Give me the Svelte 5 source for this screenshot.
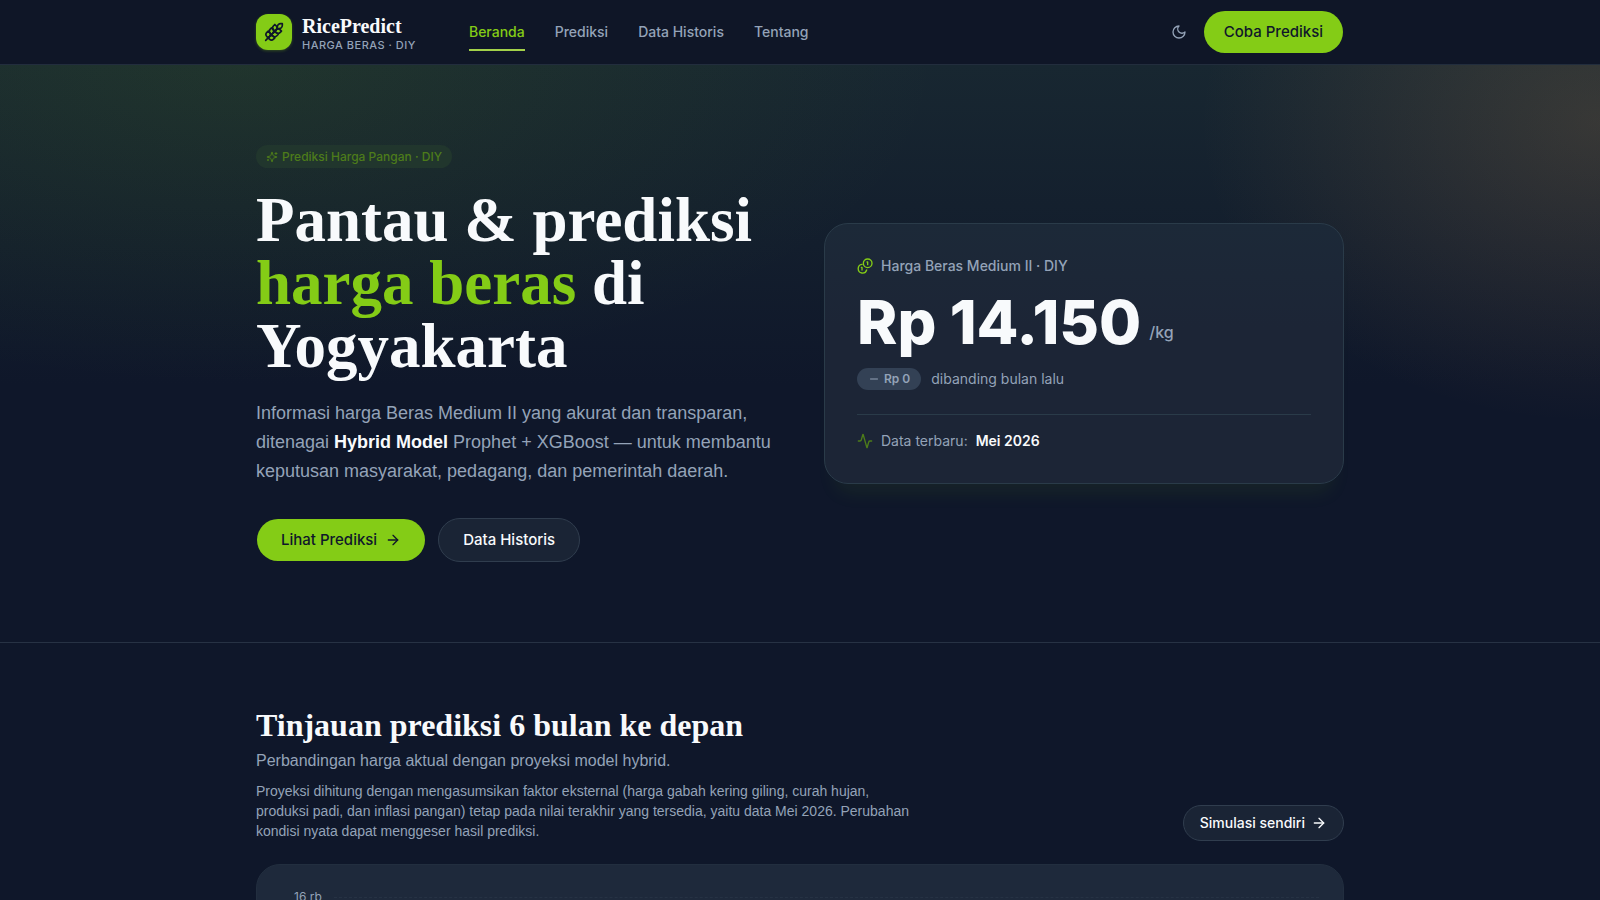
<script lang="ts">
  type Page = { id: string; label: string };

  const pages: Page[] = [
    { id: 'beranda', label: 'Beranda' },
    { id: 'prediksi', label: 'Prediksi' },
    { id: 'historis', label: 'Data Historis' },
    { id: 'tentang', label: 'Tentang' }
  ];

  let current = $state('beranda');

  // Latest recorded month, prices in rupiah per kg
  const price = 14150;
  const lastMonthPrice = 14150;
  const latestMonth = 'Mei 2026';

  const rupiah = (n: number) => 'Rp ' + String(n).replace(/\B(?=(\d{3})+$)/g, '.');
  const change = $derived(rupiah(Math.abs(price - lastMonthPrice)));
</script>

{#snippet arrow()}
  <svg class="icon" viewBox="0 0 24 24" aria-hidden="true"><path d="M5 12h14" /><path d="m12 5 7 7-7 7" /></svg>
{/snippet}

<header>
  <div class="container bar">
    <a class="brand" href="#beranda">
      <span class="logo">
        <svg class="wheat" viewBox="0 0 24 24" aria-hidden="true">
          <path d="M2 22 16 8" />
          <path d="M3.47 12.53 5 11l1.53 1.53a3.5 3.5 0 0 1 0 4.94L5 19l-1.53-1.53a3.5 3.5 0 0 1 0-4.94Z" />
          <path d="M7.47 8.53 9 7l1.53 1.53a3.5 3.5 0 0 1 0 4.94L9 15l-1.53-1.53a3.5 3.5 0 0 1 0-4.94Z" />
          <path d="M11.47 4.53 13 3l1.53 1.53a3.5 3.5 0 0 1 0 4.94L13 11l-1.53-1.53a3.5 3.5 0 0 1 0-4.94Z" />
          <path d="M20 2h2v2a4 4 0 0 1-4 4h-2V6a4 4 0 0 1 4-4Z" />
          <path d="M11.47 17.47 13 19l-1.53 1.53a3.5 3.5 0 0 1-4.94 0L5 19l1.53-1.53a3.5 3.5 0 0 1 4.94 0Z" />
          <path d="M15.47 13.47 17 15l-1.53 1.53a3.5 3.5 0 0 1-4.94 0L9 15l1.53-1.53a3.5 3.5 0 0 1 4.94 0Z" />
          <path d="M19.47 9.47 21 11l-1.53 1.53a3.5 3.5 0 0 1-4.94 0L13 11l1.53-1.53a3.5 3.5 0 0 1 4.94 0Z" />
        </svg>
      </span>
      <span class="brand-text">
        <span class="brand-name">RicePredict</span>
        <span class="brand-sub">Harga Beras · DIY</span>
      </span>
    </a>

    <nav>
      {#each pages as page (page.id)}
        <a href="#{page.id}" class:active={current === page.id} onclick={() => (current = page.id)}>{page.label}</a>
      {/each}
    </nav>

    <div class="actions">
      <button class="theme" aria-label="Ganti tema">
        <svg class="icon" viewBox="0 0 24 24" aria-hidden="true"><path d="M12 3a6 6 0 0 0 9 9 9 9 0 1 1-9-9Z" /></svg>
      </button>
      <a class="btn primary nav-cta" href="#prediksi">Coba Prediksi</a>
    </div>
  </div>
</header>

<main>
  <section class="hero">
    <div class="container hero-grid">
      <div>
        <span class="tag">
          <svg class="icon" viewBox="0 0 24 24" aria-hidden="true">
            <path d="M9.94 15.5A2 2 0 0 0 8.5 14.06l-6.14-1.58a.5.5 0 0 1 0-.96L8.5 9.94A2 2 0 0 0 9.94 8.5l1.58-6.14a.5.5 0 0 1 .96 0L14.06 8.5a2 2 0 0 0 1.44 1.44l6.14 1.58a.5.5 0 0 1 0 .96l-6.14 1.58a2 2 0 0 0-1.44 1.44l-1.58 6.14a.5.5 0 0 1-.96 0z" />
            <path d="M20 3v4M22 5h-4M4 17v2M5 18H3" />
          </svg>
          Prediksi Harga Pangan · DIY
        </span>
        <h1>Pantau &amp; prediksi <em>harga beras</em> di Yogyakarta</h1>
        <p class="lede">
          Informasi harga Beras Medium II yang akurat dan transparan, ditenagai
          <strong>Hybrid Model</strong> Prophet + XGBoost — untuk membantu
          keputusan masyarakat, pedagang, dan pemerintah daerah.
        </p>
        <div class="cta">
          <a class="btn primary" href="#prediksi">Lihat Prediksi {@render arrow()}</a>
          <a class="btn" href="#historis">Data Historis</a>
        </div>
      </div>

      <article class="price-card">
        <p class="row title">
          <svg class="icon lime" viewBox="0 0 24 24" aria-hidden="true">
            <circle cx="16" cy="8" r="6.5" />
            <path d="M7.5 9.6a6.5 6.5 0 1 0 7 8.4" />
            <path d="M15 6h1v4M6.5 14h1v4" />
          </svg>
          Harga Beras Medium II · DIY
        </p>
        <p class="price">{rupiah(price)} <small>/kg</small></p>
        <p class="row compare">
          <span class="chip">
            <svg class="icon" viewBox="0 0 24 24" aria-hidden="true"><path d="M5 12h14" /></svg>
            {change}
          </span>
          dibanding bulan lalu
        </p>
        <p class="row latest">
          <svg class="icon pulse" viewBox="0 0 24 24" aria-hidden="true">
            <path d="M22 12h-2.48a2 2 0 0 0-1.93 1.46l-2.35 8.36a.25.25 0 0 1-.48 0L9.24 2.18a.25.25 0 0 0-.48 0l-2.35 8.36A2 2 0 0 1 4.49 12H2" />
          </svg>
          Data terbaru: <strong>{latestMonth}</strong>
        </p>
      </article>
    </div>
  </section>

  <section class="container overview">
    <div class="overview-head">
      <div class="overview-text">
        <h2>Tinjauan prediksi 6 bulan ke depan</h2>
        <p class="sub">Perbandingan harga aktual dengan proyeksi model hybrid.</p>
        <p class="note">
          Proyeksi dihitung dengan mengasumsikan faktor eksternal (harga gabah
          kering giling, curah hujan, produksi padi, dan inflasi pangan) tetap
          pada nilai terakhir yang tersedia, yaitu data Mei 2026. Perubahan
          kondisi nyata dapat menggeser hasil prediksi.
        </p>
      </div>
      <a class="btn small" href="#prediksi">Simulasi sendiri {@render arrow()}</a>
    </div>

    <div class="chart-card">
      <div class="tick"><span>16 rb</span><i></i></div>
    </div>
  </section>
</main>

<style>
  :global(body) { background: #0f172a; }

  header, main { font-family: Inter, "Liberation Sans", sans-serif; color: #f8fafc; }
  p, h1, h2 { margin: 0; }
  a { color: inherit; text-decoration: none; }

  .container { box-sizing: border-box; width: 100%; max-width: 1152px; margin: 0 auto; padding: 0 32px; }
  .icon { width: 16px; height: 16px; flex: none; fill: none; stroke: currentColor; stroke-width: 2; stroke-linecap: round; stroke-linejoin: round; }

  /* ─── Header ─── */
  header { background: #0f1627; border-bottom: 1px solid #222d3d; }
  .bar { display: flex; align-items: center; height: 64px; }
  .brand { display: flex; align-items: center; gap: 10px; margin-right: 53px; }
  .logo { display: grid; place-items: center; width: 36px; height: 36px; border-radius: 12px; background: #84cc16; color: #0f172a; box-shadow: 0 1px 3px rgb(132 204 22 / 0.3); }
  .wheat { width: 20px; height: 20px; fill: none; stroke: currentColor; stroke-width: 2; stroke-linecap: round; stroke-linejoin: round; }
  .brand-text { display: flex; flex-direction: column; gap: 2px; padding-top: 3px; }
  .brand-name { font: 700 20px/20px "Liberation Serif", serif; }
  .brand-sub { font-size: 11px; line-height: 14px; font-weight: 500; letter-spacing: 0.5px; text-transform: uppercase; color: #94a3b8; }

  nav { display: flex; gap: 30px; }
  nav a { padding: 9px 0; border-bottom: 2px solid transparent; border-top: 2px solid transparent; font-size: 14px; line-height: 16px; font-weight: 500; color: #94a3b8; }
  nav a.active { color: #84cc16; border-bottom-color: #a3d14a; }

  .actions { display: flex; align-items: center; gap: 8px; margin-left: auto; }
  .theme { display: grid; place-items: center; width: 32px; height: 32px; padding: 0; border: 0; background: none; color: #94a3b8; cursor: pointer; }

  .btn { display: inline-flex; align-items: center; gap: 8px; padding: 11px 24px; border: 1px solid #303d4e; border-radius: 22px; background: #1a2435; font-size: 15px; line-height: 20px; font-weight: 500; }
  .btn.primary { background: #84cc16; background-clip: padding-box; border-color: transparent; color: #0f172a; }
  .btn.nav-cta { padding: 11px 20px; }
  .btn.small { gap: 6px; padding: 8px 16px; font-size: 14px; line-height: 18px; white-space: nowrap; }

  /* ─── Hero ─── */
  .hero {
    padding: 80px 0;
    border-bottom: 1px solid #273244;
    background:
      radial-gradient(ellipse 700px 320px at 15% 0%, rgb(101 163 13 / 0.11), transparent),
      radial-gradient(ellipse 400px 300px at 100% 10%, rgb(190 135 80 / 0.2), transparent),
      linear-gradient(#182731, #0f172a 320px);
  }
  .hero-grid { display: grid; grid-template-columns: 1fr 1fr; gap: 48px; align-items: center; }
  .tag { display: inline-flex; align-items: center; gap: 4px; padding: 3px 10px; border-radius: 12px; background: #21362d; color: #4d7c1a; font-size: 12px; line-height: 17px; font-weight: 500; }
  .tag .icon { width: 12px; height: 12px; }
  h1 { margin-top: 21px; font: 700 63px/63px "Liberation Serif", serif; }
  h1 em { font-style: normal; color: #84cc16; }
  .lede, .sub, .note { font-family: "Liberation Sans", sans-serif; color: #94a3b8; }
  .lede { margin-top: 21px; font-size: 18px; line-height: 29px; }
  .lede strong { font-weight: 600; color: #f8fafc; }
  .cta { display: flex; gap: 12px; margin-top: 32px; }

  .price-card { padding: 32px; border: 1px solid #2a3b49; border-radius: 24px; background: linear-gradient(#1c2938, #1c2536 40%); box-shadow: 0 20px 20px -12px rgb(132 204 22 / 0.08); }
  .row { display: flex; align-items: center; gap: 8px; font-size: 14px; line-height: 20px; color: #94a3b8; }
  .title { font-weight: 500; }
  .lime { color: #84cc16; }
  .price { display: flex; align-items: flex-end; gap: 8px; margin-top: 16px; font-size: 61px; line-height: 60px; font-weight: 800; }
  .price small { padding-bottom: 8px; font-size: 16px; line-height: 24px; font-weight: 500; color: #94a3b8; }
  .compare { gap: 10px; margin-top: 16px; }
  .chip { display: inline-flex; align-items: center; gap: 4px; padding: 3px 11px; border-radius: 11px; background: #334155; font-size: 12px; line-height: 16px; font-weight: 600; }
  .chip .icon { width: 12px; height: 12px; }
  .latest { margin-top: 24px; padding-top: 16px; border-top: 1px solid #2a3b49; }
  .latest strong { font-weight: 600; color: #f8fafc; }
  .pulse { color: #4d7c1a; }

  /* ─── Overview ─── */
  .overview { padding-top: 64px; padding-bottom: 64px; }
  .overview-head { display: flex; align-items: flex-end; justify-content: space-between; gap: 32px; }
  .overview-text { max-width: 664px; }
  h2 { font: 700 32px/36px "Liberation Serif", serif; }
  .sub { margin-top: 6px; font-size: 16px; line-height: 24px; }
  .note { margin-top: 8px; font-size: 14px; line-height: 20px; }

  .chart-card { margin-top: 23px; padding: 24px; border: 1px solid #222e3f; border-radius: 24px; background: #1e293b; }
  .tick { display: flex; align-items: center; gap: 12px; padding-left: 13px; font-size: 12px; line-height: 16px; color: #94a3b8; }
  .tick i { flex: 1; border-top: 1px dashed #263244; }
</style>
